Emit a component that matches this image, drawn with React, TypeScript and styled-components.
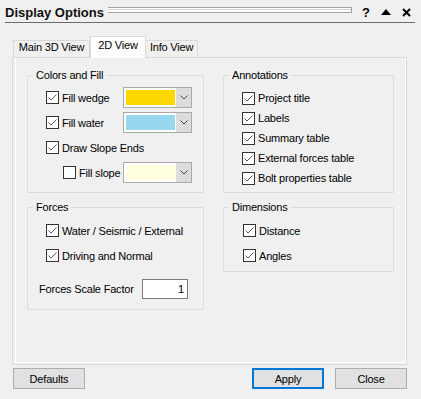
import React from "react";
import styled, { createGlobalStyle } from "styled-components";

const Global = createGlobalStyle`
  html, body { margin: 0; padding: 0; background: #f0f0f0; }
  body { font-family: "Liberation Sans", Arial, sans-serif; font-size: 11px; color: #000; }
  * { box-sizing: border-box; }
`;

const Window = styled.div`
  width: 421px;
  height: 399px;
  background: #f0f0f0;
  overflow: hidden;
  display: flex;
  flex-direction: column;
  letter-spacing: -0.2px;
`;

const TitleBar = styled.div`
  height: 23px;
  margin: 0 6px 0 5px;
  padding: 2px 4px 0 0;
  display: flex;
  align-items: center;
  border-bottom: 1px solid #6d6d6d;
`;

const Title = styled.span`
  font-size: 13px;
  font-weight: bold;
  letter-spacing: 0;
  color: #111;
`;

const Groove = styled.div`
  flex: 1;
  align-self: flex-start;
  margin: 5px 10px 0 4px;
  height: 6px;
  border-top: 1px solid #a0a0a0;
  border-bottom: 1px solid #a0a0a0;
  border-right: 1px solid #a0a0a0;
  background: linear-gradient(to bottom, #fff 0 1px, #d6d6d6 1px 2px, #fff 2px);
`;

const Help = styled.span`
  font-size: 13px;
  font-weight: bold;
  letter-spacing: 0;
  width: 8px;
  margin-right: 11px;
`;

const IconBox = styled.span<{ $ml?: number }>`
  display: flex;
  align-items: center;
  margin-left: ${(p) => p.$ml ?? 0}px;
`;

const TabArea = styled.div`
  margin: 13px 14px 0 12px;
`;

const TabStrip = styled.div`
  display: flex;
  align-items: flex-end;
  height: 21px;
  padding-left: 1px;
`;

const Tab = styled.div<{ $active?: boolean; $w: number; $ml?: number }>`
  position: relative;
  z-index: ${(p) => (p.$active ? 1 : 0)};
  width: ${(p) => p.$w}px;
  height: ${(p) => (p.$active ? 22 : 17)}px;
  margin-bottom: ${(p) => (p.$active ? -1 : 0)}px;
  margin-left: ${(p) => p.$ml ?? 0}px;
  padding-top: ${(p) => (p.$active ? 2 : 0)}px;
  border: 1px solid #d9d9d9;
  border-bottom: none;
  background: ${(p) => (p.$active ? "#ffffff" : "#f0f0f0")};
  line-height: 13px;
  text-align: center;
  white-space: nowrap;
`;

const Panel = styled.div`
  height: 308px;
  border: 1px solid #d9d9d9;
  background: #f0f0f0;
  box-shadow: inset 2px 0 0 #f0f0f0, inset 0 -1px 0 #f0f0f0, inset 3px 0 0 #ffffff,
    inset -1px 0 0 #ffffff, inset 0 -2px 0 #ffffff;
  padding: 17px 12px 0 14px;
  display: grid;
  grid-template-columns: 177px 171px;
  column-gap: 19px;
  align-items: start;
`;

const Column = styled.div`
  display: flex;
  flex-direction: column;
  gap: 14px;
`;

const Group = styled.div<{ $pb: number }>`
  border: 1px solid #dcdcdc;
  display: flex;
  flex-direction: column;
  padding-bottom: ${(p) => p.$pb}px;
`;

const Legend = styled.span`
  align-self: flex-start;
  margin: -7px 0 0 5px;
  padding: 0 3px;
  line-height: 13px;
  background: #f0f0f0;
`;

const Stack = styled.div<{ $mt: number; $gap: number }>`
  display: flex;
  flex-direction: column;
  margin-top: ${(p) => p.$mt}px;
  gap: ${(p) => p.$gap}px;
`;

const Row = styled.div<{ $h: number; $pl: number; $mt?: number }>`
  height: ${(p) => p.$h}px;
  padding-left: ${(p) => p.$pl}px;
  margin-top: ${(p) => p.$mt ?? 0}px;
  display: flex;
  align-items: center;
`;

const FillRow = styled.div<{ $indent?: number }>`
  height: 21px;
  padding-left: 18px;
  display: grid;
  grid-template-columns: 77px 69px;
  align-items: center;
  & > :first-child {
    padding-left: ${(p) => p.$indent ?? 0}px;
  }
`;

const FactorRow = styled.div`
  height: 20px;
  margin-top: 13px;
  padding-left: 11px;
  display: grid;
  grid-template-columns: 103px 46px;
  align-items: center;
`;

const CheckLabel = styled.label`
  display: flex;
  align-items: center;
  gap: 3px;
  white-space: nowrap;
`;

const Box = styled.span`
  width: 13px;
  height: 13px;
  border: 1px solid #333;
  background: #fff;
  display: flex;
  align-items: center;
  justify-content: center;
  flex: none;
`;

const Combo = styled.div`
  width: 69px;
  height: 21px;
  border: 1px solid #a9a9a9;
  background: #fff;
  display: flex;
`;

const Swatch = styled.div<{ $c: string }>`
  width: 49px;
  margin: 2px 1px 2px 2px;
  background: ${(p) => p.$c};
`;

const DropBtn = styled.div`
  width: 15px;
  background: #dcdcdc;
  display: flex;
  align-items: center;
  justify-content: center;
`;

const NumBox = styled.div`
  width: 46px;
  height: 20px;
  border: 1px solid #7a7a7a;
  background: #fff;
  text-align: right;
  padding-right: 3px;
  line-height: 18px;
`;

const ButtonRow = styled.div`
  display: flex;
  margin-top: 3px;
  padding: 0 14px 0 13px;
`;

const Button = styled.button<{ $default?: boolean; $mr?: string }>`
  width: 72px;
  height: 21px;
  padding: 0;
  font: inherit;
  letter-spacing: inherit;
  color: #000;
  background: #e1e1e1;
  border: ${(p) => (p.$default ? "2px solid #0078d7" : "1px solid #adadad")};
  margin-right: ${(p) => p.$mr ?? "0"};
`;

function Check({ checked, label }: { checked: boolean; label: string }) {
  return (
    <CheckLabel>
      <Box>
        {checked && (
          <svg width="11" height="11" viewBox="0 0 11 11">
            <polyline points="1.5,5.5 4,8 9.5,2.5" fill="none" stroke="#5a5a5a" strokeWidth="1" />
          </svg>
        )}
      </Box>
      {label}
    </CheckLabel>
  );
}

function ColorCombo({ color }: { color: string }) {
  return (
    <Combo>
      <Swatch $c={color} />
      <DropBtn>
        <svg width="8" height="5" viewBox="0 0 8 5">
          <polyline points="0.5,0.5 4,4 7.5,0.5" fill="none" stroke="#444" strokeWidth="1" />
        </svg>
      </DropBtn>
    </Combo>
  );
}

export default function App() {
  return (
    <>
      <Global />
      <Window>
        <TitleBar>
          <Title>Display Options</Title>
          <Groove />
          <Help>?</Help>
          <IconBox>
            <svg width="10" height="6" viewBox="0 0 10 6">
              <polygon points="5,0 10,6 0,6" fill="#000" />
            </svg>
          </IconBox>
          <IconBox $ml={11}>
            <svg width="9" height="9" viewBox="0 0 9 9">
              <path d="M1,1 L8,8 M8,1 L1,8" stroke="#000" strokeWidth="2" />
            </svg>
          </IconBox>
        </TitleBar>

        <TabArea>
          <TabStrip>
            <Tab $w={77}>Main 3D View</Tab>
            <Tab $w={56} $active>
              2D View
            </Tab>
            <Tab $w={53} $ml={-1}>
              Info View
            </Tab>
          </TabStrip>
          <Panel>
            <Column>
              <Group $pb={9}>
                <Legend>Colors and Fill</Legend>
                <Stack $mt={5} $gap={4}>
                  <FillRow>
                    <Check checked label="Fill wedge" />
                    <ColorCombo color="#ffd700" />
                  </FillRow>
                  <FillRow>
                    <Check checked label="Fill water" />
                    <ColorCombo color="#98d8ef" />
                  </FillRow>
                  <Row $h={21} $pl={18}>
                    <Check checked label="Draw Slope Ends" />
                  </Row>
                  <FillRow $indent={17}>
                    <Check checked={false} label="Fill slope" />
                    <ColorCombo color="#ffffe0" />
                  </FillRow>
                </Stack>
              </Group>
              <Group $pb={10}>
                <Legend>Forces</Legend>
                <Stack $mt={6} $gap={4}>
                  <Row $h={21} $pl={18}>
                    <Check checked label="Water / Seismic / External" />
                  </Row>
                  <Row $h={21} $pl={18}>
                    <Check checked label="Driving and Normal" />
                  </Row>
                </Stack>
                <FactorRow>
                  <span>Forces Scale Factor</span>
                  <NumBox>1</NumBox>
                </FactorRow>
              </Group>
            </Column>
            <Column>
              <Group $pb={4}>
                <Legend>Annotations</Legend>
                <Stack $mt={6} $gap={0}>
                  <Row $h={20} $pl={18}>
                    <Check checked label="Project title" />
                  </Row>
                  <Row $h={20} $pl={18}>
                    <Check checked label="Labels" />
                  </Row>
                  <Row $h={20} $pl={18}>
                    <Check checked label="Summary table" />
                  </Row>
                  <Row $h={20} $pl={18}>
                    <Check checked label="External forces table" />
                  </Row>
                  <Row $h={20} $pl={18}>
                    <Check checked label="Bolt properties table" />
                  </Row>
                </Stack>
              </Group>
              <Group $pb={5}>
                <Legend>Dimensions</Legend>
                <Stack $mt={6} $gap={4}>
                  <Row $h={21} $pl={19}>
                    <Check checked label="Distance" />
                  </Row>
                  <Row $h={21} $pl={19}>
                    <Check checked label="Angles" />
                  </Row>
                </Stack>
              </Group>
            </Column>
          </Panel>
        </TabArea>

        <ButtonRow>
          <Button $mr="auto">Defaults</Button>
          <Button $default $mr="11px">
            Apply
          </Button>
          <Button>Close</Button>
        </ButtonRow>
      </Window>
    </>
  );
}
